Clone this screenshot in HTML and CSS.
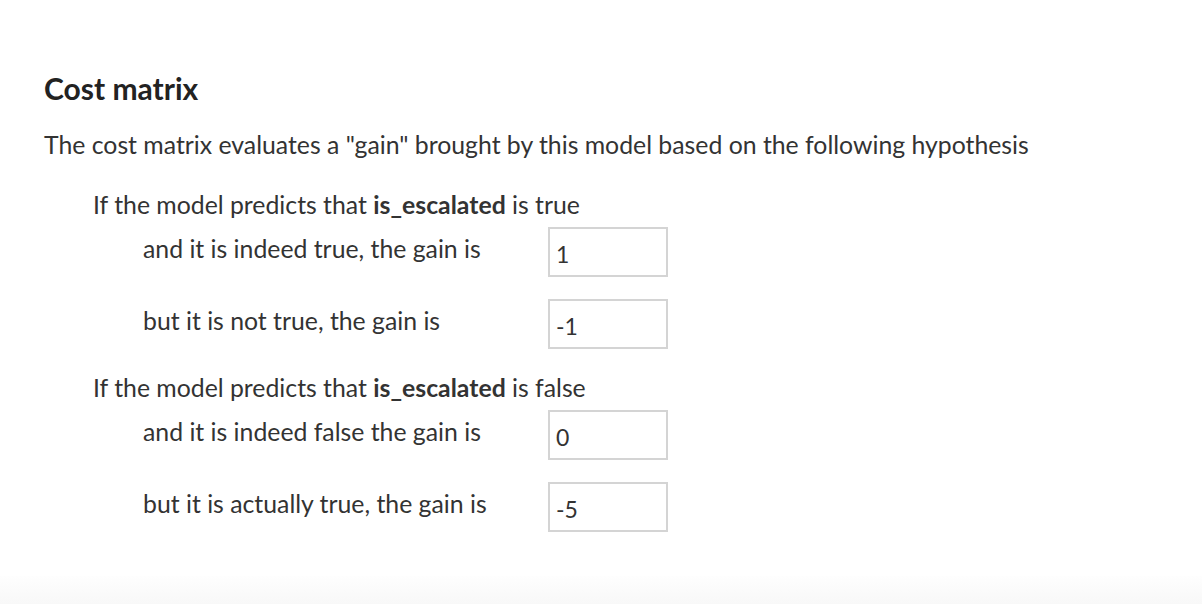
FILE: index.html
```html
<!DOCTYPE html>
<html>
<head>
  <title>Cost matrix</title>
  <link rel="stylesheet" href="styles.css">
</head>
<body>
  <div class="page">
    <div class="content">
      <h2 class="title">Cost matrix</h2>
      <p class="intro">The cost matrix evaluates a "gain" brought by this model based on the following hypothesis</p>

      <div class="case">
        <div class="case-title">If the model predicts that <b>is_escalated</b> is true</div>
        <div class="row">
          <label class="row-label">and it is indeed true, the gain is</label>
          <input class="gain" type="text" value="1">
        </div>
        <div class="row">
          <label class="row-label">but it is not true, the gain is</label>
          <input class="gain" type="text" value="-1">
        </div>
      </div>

      <div class="case">
        <div class="case-title">If the model predicts that <b>is_escalated</b> is false</div>
        <div class="row">
          <label class="row-label">and it is indeed false the gain is</label>
          <input class="gain" type="text" value="0">
        </div>
        <div class="row">
          <label class="row-label">but it is actually true, the gain is</label>
          <input class="gain" type="text" value="-5">
        </div>
      </div>
    </div>
    <div class="fade"></div>
  </div>
</body>
</html>
```

FILE: styles.css
```css
body, html {
  height: 100%;
  margin: 0;
}
body {
  font-family: Lato, "Liberation Sans", sans-serif;
  color: #333;
  background: #fff;
}
.page {
  min-height: 100%;
  display: flex;
  flex-direction: column;
}
.content {
  padding: 70px 0 0 44px;
}
.title {
  margin: 0;
  font-size: 30px;
  font-weight: 700;
  line-height: 36px;
  color: #222;
}
.intro {
  margin: 23px 0 0 0;
  font-size: 24.8px;
  line-height: 32px;
}
.case {
  padding-left: 49px;
  margin-top: 28px;
}
.case + .case {
  margin-top: 23px;
}
.case-title {
  font-size: 24.8px;
  line-height: 32px;
}
.case-title b {
  font-weight: 700;
}
.row {
  display: flex;
  align-items: flex-start;
  padding-left: 50px;
  margin-top: 6px;
}
.row + .row {
  margin-top: 22px;
}
.row-label {
  width: 405px;
  font-size: 24.8px;
  line-height: 32px;
  padding-top: 6px;
}
.gain {
  box-sizing: border-box;
  width: 120px;
  height: 50px;
  margin: 0;
  padding: 4px 6px 0 6px;
  border: 2px solid #d4d4d4;
  border-radius: 0;
  font-family: inherit;
  font-size: 23px;
  color: #333;
  background: #fff;
  outline: none;
}
.fade {
  margin-top: auto;
  height: 28px;
  background: linear-gradient(#fefefe, #f8f8f8);
}
```
